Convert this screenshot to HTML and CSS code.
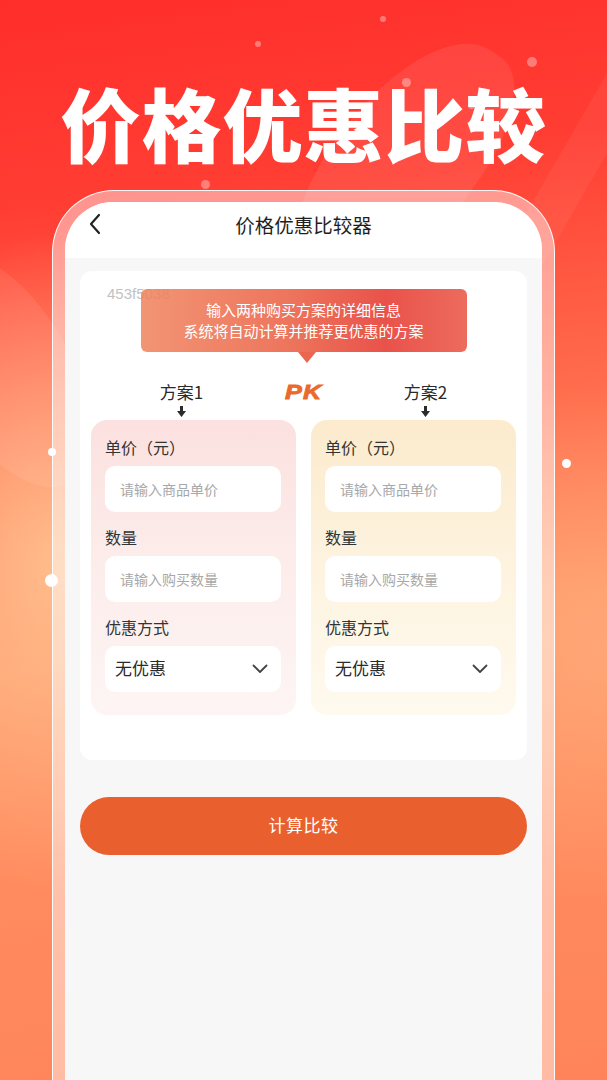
FILE: index.html
```html
<!DOCTYPE html>
<html lang="zh-CN">
<head>
<meta charset="utf-8">
<title>价格优惠比较</title>
<link rel="stylesheet" href="styles.css">
</head>
<body>
<div class="page">
  <div class="swoosh swoosh-a"></div>
  <div class="swoosh swoosh-b"></div>
  <div class="swoosh swoosh-c"></div>
  <span class="dot d1"></span><span class="dot d2"></span><span class="dot d3"></span>
  <span class="dot d4"></span><span class="dot d5"></span><span class="dot d6"></span>
  <span class="dot d7"></span><span class="dot d8"></span><span class="dot d9"></span>

  <h1 class="hero">价格优惠比较</h1>

  <div class="phone">
    <div class="screen">
      <header class="nav">
        <svg class="back" width="14" height="22" viewBox="0 0 14 22"><path d="M11 2 L3 11 L11 20" fill="none" stroke="#222" stroke-width="2.2" stroke-linecap="round" stroke-linejoin="round"/></svg>
        <span class="nav-title">价格优惠比较器</span>
      </header>
      <main class="content">
        <section class="card">
          <span class="watermark">453f5038</span>
          <div class="bubble">
            <p>输入两种购买方案的详细信息</p>
            <p>系统将自动计算并推荐更优惠的方案</p>
          </div>
          <div class="vs-row">
            <div class="vs-cell">
              <span class="plan">方案1</span>
              <svg class="down" width="9" height="11" viewBox="0 0 9 11"><path d="M3 0 H6 V5 H9 L4.5 11 L0 5 H3 Z" fill="#2b2b2b"/></svg>
            </div>
            <div class="vs-cell"><span class="pk">PK</span></div>
            <div class="vs-cell">
              <span class="plan">方案2</span>
              <svg class="down" width="9" height="11" viewBox="0 0 9 11"><path d="M3 0 H6 V5 H9 L4.5 11 L0 5 H3 Z" fill="#2b2b2b"/></svg>
            </div>
          </div>
          <div class="plans">
            <div class="plan-box plan-a">
              <label class="field-label">单价（元）</label>
              <div class="input">请输入商品单价</div>
              <label class="field-label">数量</label>
              <div class="input">请输入购买数量</div>
              <label class="field-label">优惠方式</label>
              <div class="select">
                <span>无优惠</span>
                <svg width="16" height="10" viewBox="0 0 16 10"><path d="M1.5 1.5 L8 8 L14.5 1.5" fill="none" stroke="#444" stroke-width="1.8" stroke-linecap="round" stroke-linejoin="round"/></svg>
              </div>
            </div>
            <div class="plan-box plan-b">
              <label class="field-label">单价（元）</label>
              <div class="input">请输入商品单价</div>
              <label class="field-label">数量</label>
              <div class="input">请输入购买数量</div>
              <label class="field-label">优惠方式</label>
              <div class="select">
                <span>无优惠</span>
                <svg width="16" height="10" viewBox="0 0 16 10"><path d="M1.5 1.5 L8 8 L14.5 1.5" fill="none" stroke="#444" stroke-width="1.8" stroke-linecap="round" stroke-linejoin="round"/></svg>
              </div>
            </div>
          </div>
        </section>
        <button class="calc">计算比较</button>
      </main>
    </div>
  </div>
</div>
</body>
</html>
```

FILE: styles.css
```css
* { box-sizing: border-box; margin: 0; padding: 0; }

html, body {
  width: 607px;
  height: 1080px;
  overflow: hidden;
}

body {
  font-family: "Noto Sans CJK SC", "Noto Sans", sans-serif;
  color: #333;
}

.page {
  position: relative;
  width: 607px;
  height: 1080px;
  display: flex;
  flex-direction: column;
  overflow: hidden;
  background:
    radial-gradient(ellipse 260px 330px at 10% 52%, rgba(255, 200, 150, 0.85), rgba(255, 200, 150, 0) 100%),
    radial-gradient(ellipse 300px 260px at 100% 60%, rgba(255, 180, 130, 0.6), rgba(255, 180, 130, 0) 100%),
    linear-gradient(172deg, #ff2e2b 0%, #ff3d33 18%, #ff6448 36%, #ff9466 58%, #ff8a5e 80%, #ff845a 100%);
}

.swoosh {
  position: absolute;
  pointer-events: none;
}
.swoosh-a {
  left: 330px;
  top: 20px;
  width: 140px;
  height: 300px;
  border-radius: 60% 40% 50% 50%;
  background: rgba(255, 255, 255, 0.08);
  transform: rotate(35deg);
}
.swoosh-b {
  left: -60px;
  top: 240px;
  width: 130px;
  height: 260px;
  border-radius: 50%;
  background: rgba(255, 255, 255, 0.08);
  transform: rotate(-30deg);
}
.swoosh-c {
  left: 560px;
  top: 0;
  width: 40px;
  height: 320px;
  background: rgba(255, 255, 255, 0.05);
  transform: rotate(30deg);
}

.dot {
  position: absolute;
  border-radius: 50%;
  background: rgba(255, 255, 255, 0.35);
}
.d1 { left: 380px; top: 16px; width: 6px; height: 6px; }
.d2 { left: 255px; top: 41px; width: 6px; height: 6px; }
.d3 { left: 527px; top: 57px; width: 10px; height: 10px; }
.d4 { left: 402px; top: 78px; width: 9px; height: 9px; }
.d5 { left: 468px; top: 102px; width: 7px; height: 7px; }
.d6 { left: 201px; top: 180px; width: 9px; height: 9px; }
.d7 { left: 48px; top: 448px; width: 8px; height: 8px; background: #fff; }
.d8 { left: 45px; top: 574px; width: 13px; height: 13px; background: #fff; }
.d9 { left: 562px; top: 459px; width: 9px; height: 9px; background: #fff; }

.hero {
  position: relative;
  margin-top: 81px;
  text-align: center;
  font-size: 80px;
  line-height: 80px;
  font-weight: 900;
  color: #fff;
  letter-spacing: 1px;
}

.phone {
  position: relative;
  flex: 1;
  margin: 29px 52px 0;
  padding: 11px 12px 0;
  border: 1.5px solid rgba(255, 255, 255, 0.95);
  border-bottom: none;
  border-radius: 62px 62px 0 0;
  background: linear-gradient(180deg, rgba(255, 255, 255, 0.45) 0%, rgba(255, 255, 255, 0.5) 50%, rgba(255, 255, 255, 0.45) 100%);
  display: flex;
}

.screen {
  flex: 1;
  background: #f7f7f7;
  border-radius: 48px 48px 0 0;
  overflow: hidden;
  display: flex;
  flex-direction: column;
}

.nav {
  position: relative;
  height: 56px;
  padding-bottom: 12px;
  background: #fff;
  display: flex;
  align-items: center;
  justify-content: center;
}
.back {
  position: absolute;
  left: 23px;
  top: 11px;
}
.nav-title {
  font-size: 19.5px;
  font-weight: 400;
  color: #1f1f1f;
}

.content {
  padding: 13px 15px 0;
  display: flex;
  flex-direction: column;
}

.card {
  position: relative;
  background: #fff;
  border-radius: 12px;
  padding: 18px 11px 45px;
}

.watermark {
  position: absolute;
  left: 27px;
  top: 14px;
  font-family: "Liberation Sans", "Noto Sans", sans-serif;
  font-size: 15px;
  color: #c2c2c2;
}

.bubble {
  position: relative;
  width: 326px;
  margin: 0 auto;
  padding: 10px 0 11px;
  border-radius: 6px;
  background: linear-gradient(90deg, rgba(240, 134, 96, 0.88) 0%, rgba(236, 110, 84, 0.95) 45%, #e9524a 75%, rgba(236, 100, 84, 0.95) 100%);
  color: #fff;
  text-align: center;
  font-size: 15px;
  line-height: 21px;
}
.bubble::after {
  content: "";
  position: absolute;
  left: 50%;
  bottom: -11px;
  margin-left: -6px;
  border-left: 9px solid transparent;
  border-right: 9px solid transparent;
  border-top: 11px solid #ea6650;
}

.vs-row {
  margin-top: 28px;
  display: grid;
  grid-template-columns: repeat(3, 122px);
  justify-content: center;
}
.vs-cell {
  display: flex;
  flex-direction: column;
  align-items: center;
}
.plan {
  font-size: 17px;
  line-height: 24px;
  color: #2a2a2a;
}
.down {
  margin-top: 2px;
  display: block;
}
.pk {
  display: inline-block;
  font-family: "Liberation Sans", "Noto Sans", sans-serif;
  font-size: 21px;
  line-height: 24px;
  font-weight: 700;
  font-style: italic;
  color: #ea6a2e;
  -webkit-text-stroke: 0.9px #ea6a2e;
  letter-spacing: 1px;
  transform: scaleX(1.2);
}

.plans {
  margin-top: 3px;
  display: grid;
  grid-template-columns: 1fr 1fr;
  gap: 15px;
}

.plan-box {
  display: flex;
  flex-direction: column;
  padding: 16px 15px 23px 14px;
  border-radius: 16px;
}
.plan-a {
  background: linear-gradient(180deg, #fbe1df 0%, #fcedeb 50%, #fdf5f4 100%);
}
.plan-b {
  background: linear-gradient(180deg, #fcebcd 0%, #fdf3df 50%, #fffaef 100%);
}

.field-label {
  font-size: 16px;
  line-height: 22px;
  color: #333;
}
.input, .select {
  height: 46px;
  margin-top: 8px;
  margin-bottom: 14px;
  background: #fff;
  border-radius: 10px;
  display: flex;
  align-items: center;
}
.input {
  padding-left: 15px;
  font-size: 14px;
  color: #a8a8a8;
}
.select {
  margin-bottom: 0;
  padding: 0 13px 3px 10px;
  justify-content: space-between;
  font-size: 17px;
  color: #2a2a2a;
}
.select svg {
  margin-top: 3px;
}

.calc {
  margin-top: 37px;
  height: 58px;
  padding-bottom: 4px;
  border: none;
  border-radius: 29px;
  background: #e9602e;
  color: #fff;
  font-family: "Noto Sans CJK SC", sans-serif;
  font-size: 17px;
  letter-spacing: 0.5px;
}
```
